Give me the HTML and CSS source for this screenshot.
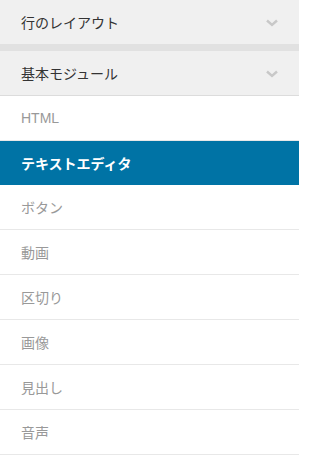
FILE: index.html
```html
<!DOCTYPE html>
<html lang="ja">
<head>
<meta charset="utf-8">
<link rel="stylesheet" href="styles.css">
</head>
<body>
<div class="panel">
  <div class="section">
    <div class="section-head">
      <span class="section-title">行のレイアウト</span>
      <svg class="chev" width="12" height="8" viewBox="0 0 12 8"><path d="M1 1.5 L6 6 L11 1.5" fill="none" stroke="#c8c8c8" stroke-width="2.4"/></svg>
    </div>
  </div>
  <div class="section open">
    <div class="section-head">
      <span class="section-title">基本モジュール</span>
      <svg class="chev" width="12" height="8" viewBox="0 0 12 8"><path d="M1 1.5 L6 6 L11 1.5" fill="none" stroke="#c8c8c8" stroke-width="2.4"/></svg>
    </div>
    <ul class="items">
      <li class="item">HTML</li>
      <li class="item active">テキストエディタ</li>
      <li class="item">ボタン</li>
      <li class="item">動画</li>
      <li class="item">区切り</li>
      <li class="item">画像</li>
      <li class="item">見出し</li>
      <li class="item">音声</li>
    </ul>
  </div>
</div>
</body>
</html>
```

FILE: styles.css
```css
*, *::before, *::after {
  box-sizing: border-box;
}
html, body {
  margin: 0;
  padding: 0;
  background: #fff;
}
body {
  font-family: "Liberation Sans", "Noto Sans CJK JP", sans-serif;
  font-size: 14px;
}
.panel {
  width: 299px;
}
.section + .section {
  border-top: 7px solid #e1e1e1;
}
.section-head {
  height: 44px;
  background: #f0f0f0;
  display: flex;
  align-items: center;
  justify-content: space-between;
  padding: 0 21px 0 21px;
}
.section-title {
  color: #333;
  font-size: 14px;
}
.chev {
  display: block;
  margin-top: 1px;
}
.open .section-head {
  height: 45px;
  border-bottom: 1px solid #dcdcdc;
}
.items {
  list-style: none;
  margin: 0;
  padding: 0;
}
.item {
  height: 45px;
  display: flex;
  align-items: center;
  padding: 0 21px;
  color: #999;
  font-size: 14px;
  border-bottom: 1px solid #e8e8e8;
}
.item.active {
  height: 44px;
  background: #0073a5;
  color: #fff;
  font-weight: bold;
  border-bottom: none;
}
```
